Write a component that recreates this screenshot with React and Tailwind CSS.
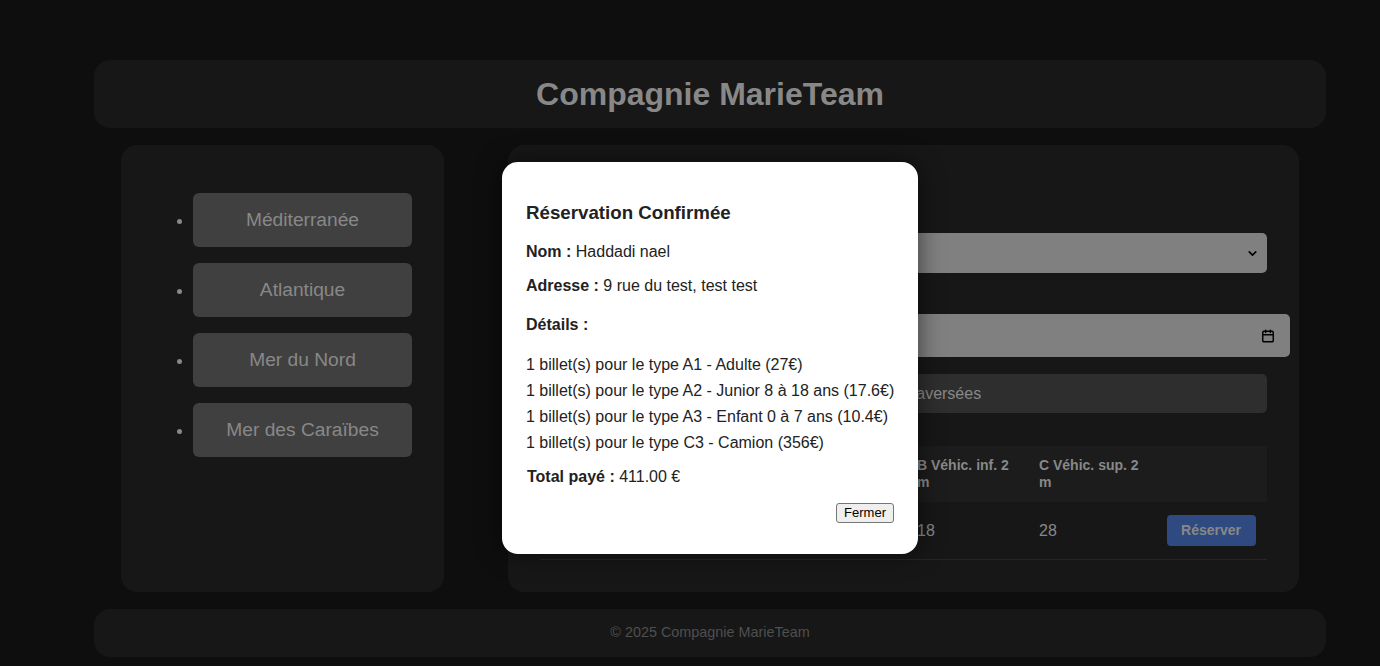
import { FiChevronDown, FiCalendar } from "react-icons/fi"

const secteurs = ["Méditerranée", "Atlantique", "Mer du Nord", "Mer des Caraïbes"]

const billets = [
  "1 billet(s) pour le type A1 - Adulte (27€)",
  "1 billet(s) pour le type A2 - Junior 8 à 18 ans (17.6€)",
  "1 billet(s) pour le type A3 - Enfant 0 à 7 ans (10.4€)",
  "1 billet(s) pour le type C3 - Camion (356€)",
]

const SecteurList = () => (
  <aside className="w-[323px] shrink-0 rounded-[16px] bg-[#171717] p-8">
    <ul className="mt-4 flex list-disc flex-col gap-4 pl-10 text-[#888] marker:text-[#888]">
      {secteurs.map((s) => (
        <li key={s}>
          <div className="flex h-[54px] items-center justify-center rounded-[6px] bg-[#404040] text-[19.2px] text-[#888]">
            {s}
          </div>
        </li>
      ))}
    </ul>
  </aside>
)

const Traversees = () => (
  <section className="min-w-0 flex-1 rounded-[16px] bg-[#171717] px-8 pt-8 pb-8 text-[#888]">
    <h2 className="h-[24px] text-[20px] font-bold leading-[24px]">Traversées</h2>
    <label className="mt-[9px] block h-[22px] text-[15px] leading-[22px]">Secteur</label>
    <div className="mt-[1px] flex h-[40px] items-center justify-between rounded-[5px] bg-[#808080] pl-3 pr-2 text-[16px] text-[#222]">
      <span>Méditerranée</span>
      <FiChevronDown className="h-[13px] w-[13px] stroke-[3] text-black" />
    </div>
    <label className="mt-[19px] block h-[22px] text-[15px] leading-[22px]">Date</label>
    <div className="flex h-[43px] w-[750px] items-center justify-between rounded-[5px] bg-[#808080] pl-3 pr-[15px] text-[16px] text-[#222]">
      <span>jj/mm/aaaa</span>
      <FiCalendar className="h-[14px] w-[14px] stroke-[2.5] text-black" />
    </div>
    <div className="mt-[17px] flex h-[39px] items-center whitespace-nowrap rounded-[5px] bg-[#2e2e2e] pl-[3px] text-[16px] text-[#888]">
      Choisissez un secteur et une date pour afficher les traversées
    </div>
    <div className="mt-[33px]">
      <div className="grid h-[56px] grid-cols-[120px_125px_124px_122px_122px_1fr] items-center bg-[#1c1c1c] text-[14px] font-bold leading-[17px] text-[#888]">
        <div className="px-2">Traversée</div>
        <div className="px-2">Heure</div>
        <div className="px-2">A Passager</div>
        <div className="px-2">B Véhic. inf. 2 m</div>
        <div className="px-2">C Véhic. sup. 2 m</div>
        <div></div>
      </div>
      <div className="grid h-[58px] grid-cols-[120px_125px_124px_122px_122px_1fr] items-center border-b border-[#262626] text-[16px] text-[#888]">
        <div className="px-2">1</div>
        <div className="px-2">08:00</div>
        <div className="px-2">120</div>
        <div className="px-2">18</div>
        <div className="px-2">28</div>
        <div className="flex justify-center pl-[2px]">
          <button className="h-[31px] w-[89px] rounded-[4px] bg-[#2e4a80] text-[14px] font-bold text-[#888]">
            Réserver
          </button>
        </div>
      </div>
    </div>
  </section>
)

const ConfirmationModal = () => (
  <div className="absolute left-[502px] top-[162px] w-[416px] rounded-[16px] bg-white px-6 pt-[39px] pb-[31px] text-[#222] shadow-[0_0_24px_rgba(0,0,0,0.55)]">
    <h3 className="h-[24px] text-[18.72px] font-bold leading-[24px]">Réservation Confirmée</h3>
    <p className="mt-[17px] h-[20px] text-[16px] leading-[20px]">
      <strong>Nom :</strong> Haddadi nael
    </p>
    <p className="mt-[14px] h-[20px] text-[16px] leading-[20px]">
      <strong>Adresse :</strong> 9 rue du test, test test
    </p>
    <p className="mt-[19px] h-[20px] text-[16px] font-bold leading-[20px]">Détails :</p>
    <ul className="mt-[17px] whitespace-nowrap text-[16px] leading-[26px]">
      {billets.map((b) => (
        <li key={b}>{b}</li>
      ))}
    </ul>
    <p className="mt-[11px] h-[20px] pl-px text-[16px] leading-[20px]">
      <strong>Total payé :</strong> 411.00 €
    </p>
    <div className="mt-[16px] flex justify-end">
      <button className="h-[20px] rounded-[3px] border border-[#767676] bg-[#efefef] px-[7px] text-[13px] leading-[18px] text-black">
        Fermer
      </button>
    </div>
  </div>
)

export default function App() {
  return (
    <div className="relative min-h-[666px] bg-[#0e0e0e] pb-[9px] font-['Liberation_Sans',Arial,sans-serif]">
      <div className="ml-[94px] w-[1232px] pt-[60px]">
        <header className="flex h-[68px] items-center justify-center rounded-[16px] bg-[#171717]">
          <h1 className="text-[32px] font-bold text-[#888]">Compagnie MarieTeam</h1>
        </header>
        <main className="mt-[17px] flex h-[447px] gap-16 px-[27px]">
          <SecteurList />
          <Traversees />
        </main>
        <footer className="mt-[17px] flex h-[48px] items-center justify-center rounded-[16px] bg-[#171717] text-[14.4px] text-[#4f4f4f]">
          © 2025 Compagnie MarieTeam
        </footer>
      </div>
      <ConfirmationModal />
    </div>
  )
}
